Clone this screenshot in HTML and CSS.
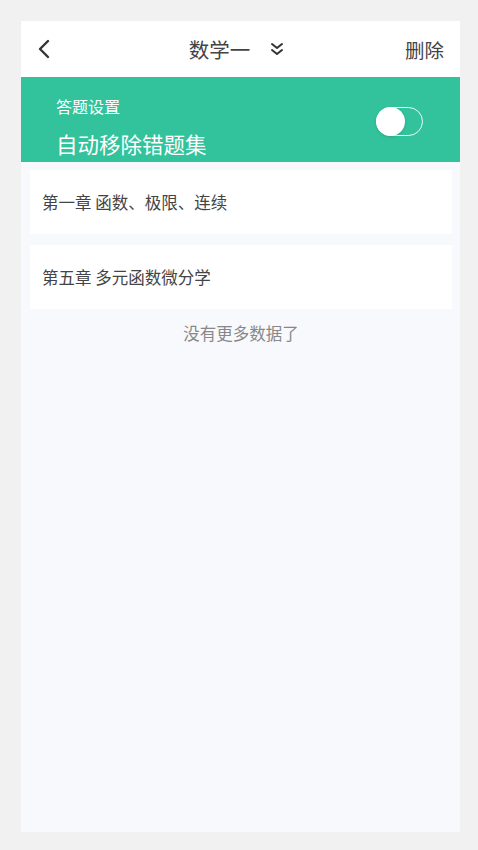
FILE: index.html
```html
<!DOCTYPE html>
<html lang="zh-CN">
<head>
    <meta charset="UTF-8">
    <meta name="viewport" content="width=device-width, initial-scale=1.0">
    <title>错题集</title>
    <link rel="stylesheet" href="styles.css">
</head>
<body>
    <div class="page">
        <div class="header">
            <span class="back">
                <svg width="14" height="20" viewBox="0 0 14 20"><path d="M11 2 L3 10 L11 18" fill="none" stroke="#333" stroke-width="2.4" stroke-linecap="round" stroke-linejoin="round"/></svg>
            </span>
            <div class="title">
                <span>数学一</span>
                <svg width="14" height="14" viewBox="0 0 14 14"><path d="M2 2 L7 6 L12 2 M2 8 L7 12 L12 8" fill="none" stroke="#333" stroke-width="2" stroke-linecap="round" stroke-linejoin="round"/></svg>
            </div>
            <span class="delete">删除</span>
        </div>
        <div class="setting">
            <div class="setting-text">
                <div class="setting-label">答题设置</div>
                <div class="setting-name">自动移除错题集</div>
            </div>
            <div class="switch"><span class="knob"></span></div>
        </div>
        <div class="list">
            <div class="item">第一章 函数、极限、连续</div>
            <div class="item">第五章 多元函数微分学</div>
            <div class="no-more">没有更多数据了</div>
        </div>
    </div>
</body>
</html>
```

FILE: styles.css
```css
body {
    margin: 0;
    background-color: #f1f1f1;
    font-family: "Noto Sans CJK SC", "Noto Sans", sans-serif;
}

.page {
    margin: 21px 18px 18px 21px;
    height: 811px;
    background-color: #f7f9fd;
    display: flex;
    flex-direction: column;
}

.header {
    height: 56px;
    background-color: #fff;
    display: grid;
    grid-template-columns: 1fr auto 1fr;
    align-items: center;
    padding: 0 16px;
}

.back {
    display: flex;
    align-items: center;
}

.title {
    display: flex;
    align-items: center;
    gap: 20px;
    font-size: 20.5px;
    color: #444;
    margin-left: -8px;
}

.delete {
    justify-self: end;
    font-size: 19.5px;
    color: #444;
}

.setting {
    height: 85px;
    background-color: #32c39c;
    display: flex;
    align-items: center;
    justify-content: space-between;
    padding: 0 37px 0 35px;
}

.setting-text {
    color: #fff;
    padding-top: 15px;
}

.setting-label {
    font-size: 16px;
    line-height: 22px;
}

.setting-name {
    font-size: 21.5px;
    line-height: 30px;
    margin-top: 12px;
}

.switch {
    width: 45px;
    height: 27px;
    border: 1px solid #e8fff7;
    border-radius: 15px;
    position: relative;
    margin-top: 3px;
}

.knob {
    position: absolute;
    left: -1px;
    top: -1px;
    width: 29px;
    height: 29px;
    border-radius: 50%;
    background-color: #fff;
    box-shadow: 0 1px 3px rgba(0, 0, 0, 0.15);
}

.list {
    padding: 8px 8px 0 9px;
    display: flex;
    flex-direction: column;
    gap: 11px;
}

.item {
    height: 64px;
    background-color: #fff;
    display: flex;
    align-items: center;
    padding-left: 12px;
    font-size: 16.5px;
    color: #444;
}

.no-more {
    text-align: center;
    font-size: 16.5px;
    color: #888;
    margin-top: 1px;
}
```
